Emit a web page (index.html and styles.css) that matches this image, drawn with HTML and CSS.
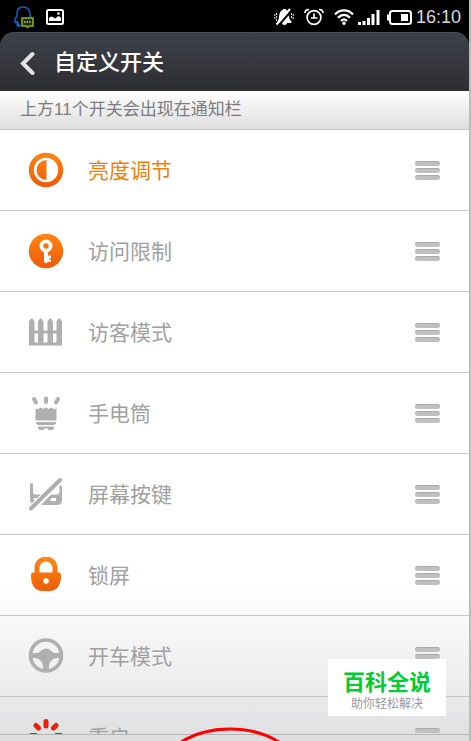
FILE: index.html
```html
<!DOCTYPE html>
<html lang="zh-CN">
<head>
    <meta charset="UTF-8">
    <meta name="viewport" content="width=device-width, initial-scale=1.0">
    <title>自定义开关</title>
    <link rel="stylesheet" href="styles.css">
</head>
<body>
    <svg width="0" height="0" class="defs" aria-hidden="true">
        <linearGradient id="orange" x1="0" y1="0" x2="0" y2="36" gradientUnits="userSpaceOnUse">
            <stop offset="0" stop-color="#ff8610"/>
            <stop offset="1" stop-color="#ec5a0a"/>
        </linearGradient>
    </svg>

    <div class="phone">
        <div class="status-bar">
            <div class="status-left">
                <svg width="22" height="24" viewBox="0 0 22 24" fill="none">
                    <path d="M7 21c-3 .5-4-.5-2-2.500M4 16.500c-1 1.500-2.800 1-2.200-1C2.300 13 4 12 4 9.500 4 5 5.500 2 10 2s7 3 7 8c0 1.500.5 2 .8 3M4 16.500c0 2 1.500 3 3 4" stroke="#0a62c8" stroke-width="1.600" stroke-linecap="round"/>
                    <path d="M9 13h11v8h-4l-1.500 1.500L13 21H9z" fill="#1c2800" stroke="#8fb414" stroke-width="1.500"/>
                    <path d="M11 17h1.500m1 0h1.500m1 0h1.500" stroke="#c0dc50" stroke-width="1.500"/>
                </svg>
                <svg width="20" height="18" viewBox="0 0 20 18">
                    <rect x="2" y="2" width="16" height="14" rx="1.500" fill="none" stroke="#fff" stroke-width="2"/>
                    <path d="M4 13v-3l2-1.500L8 9l2 1.500L12 9l2-1 2 2v3z" fill="#fff"/>
                    <circle cx="13.500" cy="5.500" r="1.300" fill="#fff"/>
                </svg>
            </div>
            <div class="status-right">
                <svg width="20" height="18" viewBox="0 0 20 18">
                    <path d="M3.500 13.500c2-2 1-6 2.500-9C7 2.500 8.500 2.500 9 1h3c0 1.500 1.500 1.500 2.200 3.500 1 3 .3 6.500 3.300 9V15h-14zM8 15h5c0 2.500-5 2.500-5 0z" fill="#fff"/>
                    <path d="M4.500 17.500 18.500 1.500" stroke="#000" stroke-width="2"/>
                    <path d="M2.500 16.500 16 1" stroke="#fff" stroke-width="2"/>
                    <path d="M2.500 5v8M.8 6v6M17.500 5v6M19.200 6v6" stroke="#ddd" stroke-dasharray="2 1"/>
                </svg>
                <svg width="20" height="18" viewBox="0 0 20 18" fill="none" stroke="#fff" stroke-width="1.700">
                    <circle cx="10" cy="9.500" r="6.900"/>
                    <path d="M10 5.500v4.500h3.500M7 10h3M1 5c0-2 1.500-3.500 4-3.500M19 5c0-2-1.500-3.500-4-3.500"/>
                </svg>
                <div class="signals">
                    <svg width="20" height="18" viewBox="0 0 20 18" fill="none" stroke="#fff" stroke-width="2.200">
                        <path d="M1 6.500c5-5.500 13-5.500 18 0M4 9.800c3.500-4 8.500-4 12 0M7 13c2-2.200 4-2.200 6 0"/>
                        <circle cx="10" cy="15.300" r="1.700" fill="#fff" stroke="none"/>
                    </svg>
                    <svg width="22" height="18" viewBox="0 0 22 18" fill="#fff">
                        <path d="M0 14h3v3H0zM4.500 13h3v4h-3zM9 10h3v7H9zM13.500 6h3v11h-3zM18.500 2h3v15h-3z"/>
                    </svg>
                </div>
                <div class="power">
                    <svg width="25" height="18" viewBox="0 0 25 18">
                        <rect x="3" y="3" width="21" height="13" rx="2.500" fill="none" stroke="#fff" stroke-width="2"/>
                        <path d="M0 6.500h3v6H0zM14 6h7v7h-7z" fill="#fff"/>
                    </svg>
                    <span class="clock">16:10</span>
                </div>
            </div>
        </div>

        <header class="title-bar">
            <button type="button" class="back" aria-label="返回">
                <svg width="16" height="24" viewBox="0 0 16 24">
                    <path d="M12.500 3 3 12.500 12.500 22" fill="none" stroke="#e2e2e2" stroke-width="4" stroke-linecap="round"/>
                </svg>
            </button>
            <h1>自定义开关</h1>
        </header>
        <p class="notice">上方11个开关会出现在通知栏</p>

        <ul class="switches">
            <li class="active">
                <svg class="icon" viewBox="0 0 36 36">
                    <circle cx="18" cy="18" r="14.700" fill="none" stroke="url(#orange)" stroke-width="5"/>
                    <path d="M18.500 8a10 10 0 0 0 0 20z" fill="url(#orange)"/>
                </svg>
                <span class="name">亮度调节</span>
                <button type="button" class="handle" aria-label="拖动 亮度调节"><i></i><i></i><i></i></button>
            </li>
            <li>
                <svg class="icon" viewBox="0 0 36 36">
                    <circle cx="18" cy="18" r="17.200" fill="url(#orange)"/>
                    <circle cx="18" cy="13" r="4.600" fill="none" stroke="#fff" stroke-width="3.800"/>
                    <path d="M16 17h4v5.500h3v3h-1.500V27H23v2h-3l-2 1.500-2-1.500z" fill="#fff"/>
                </svg>
                <span class="name">访问限制</span>
                <button type="button" class="handle" aria-label="拖动 访问限制"><i></i><i></i><i></i></button>
            </li>
            <li>
                <svg class="icon" viewBox="0 0 36 36" fill="#afafaf">
                    <path d="M1 31V7.500l2-3h1.500l2 3V31zM10 31V7.500l2-3h1.500l2 3V31zM19.500 31V7.500l2-3H23l2 3V31zM28.500 31V7.500l2-3H32l2 3V31z"/>
                    <path d="M3 16.500h30v3H3zM1 28h5.500l1 1 1-1 1 1 .5-1h5.500l1 1 1-1 1 1 1-1H25l1 1 1-1 1 1 .5-1H34v3.500H1z"/>
                </svg>
                <span class="name">访客模式</span>
                <button type="button" class="handle" aria-label="拖动 访客模式"><i></i><i></i><i></i></button>
            </li>
            <li>
                <svg class="icon" viewBox="0 0 36 36" fill="#afafaf">
                    <path d="M6 4 8 7.500M18 3.500V7M30 4l-2 3.500" stroke="#afafaf" stroke-width="4" stroke-linecap="round"/>
                    <path d="M7.500 13.500 10 14l2.500-1.500L15 14l3-1.500L21 14l2.500-1.500L26 14l2.500-.5V25.500h-21zM8 27h20v1.500L26 30H10l-2-1.500zM10 31.500h16V33l-1.500 2H20v-1.500h-4V35h-4.500L10 33z"/>
                </svg>
                <span class="name">手电筒</span>
                <button type="button" class="handle" aria-label="拖动 手电筒"><i></i><i></i><i></i></button>
            </li>
            <li>
                <svg class="icon" viewBox="0 0 36 36">
                    <path d="M2 8q2-2 3 0v9l2 1.500h10L7 28.500Q2 28 2 23zM34 10v14q0 5-5 5H13l10-10.500h6L31.500 17v-7q1.200-1.500 2.500 0z" fill="#afafaf"/>
                    <path d="M5.500 22.500 7 22h2.500v2L7 26zM23.500 22h4.500v3h-6z" fill="#fff"/>
                    <path d="M3 32.500 32 4" stroke="#fff" stroke-width="6"/>
                    <path d="M3 32.500 32 4" stroke="#afafaf" stroke-width="4" stroke-linecap="round"/>
                </svg>
                <span class="name">屏幕按键</span>
                <button type="button" class="handle" aria-label="拖动 屏幕按键"><i></i><i></i><i></i></button>
            </li>
            <li>
                <svg class="icon" viewBox="0 0 36 36">
                    <path d="M9 18v-7a9 9 0 0 1 18 0v7" fill="none" stroke="url(#orange)" stroke-width="5"/>
                    <path d="M5 15.500h26c1.500 0 2 1 2 3C33 28.500 29 34 21 34h-6C7 34 3 28.500 3 18.500c0-2 .500-3 2-3z" fill="url(#orange)"/>
                    <circle cx="18" cy="24" r="2.800" fill="#fff"/>
                </svg>
                <span class="name">锁屏</span>
                <button type="button" class="handle" aria-label="拖动 锁屏"><i></i><i></i><i></i></button>
            </li>
            <li>
                <svg class="icon" viewBox="0 0 36 36">
                    <circle cx="18" cy="17.500" r="15.500" fill="none" stroke="#afafaf" stroke-width="3.600"/>
                    <path d="M3 15h6c3 0 4.500-4.500 9-4.500s6 4.500 9 4.500h6v5h-4c-4 0-8 4-8 8v5h-6v-5c0-4-4-8-8-8H3z" fill="#afafaf"/>
                </svg>
                <span class="name">开车模式</span>
                <button type="button" class="handle" aria-label="拖动 开车模式"><i></i><i></i><i></i></button>
            </li>
            <li>
                <svg class="icon" viewBox="0 0 36 36">
                    <path d="M18 2.500V7M8 6.500l2.500 2.500M28 6.500 25.500 9M3.500 16.500h4M32.500 16.500h-4M8 27.500l3-3M28 27.500l-3-3M18 31.500v-5" stroke="#e62200" stroke-width="5" stroke-linecap="round"/>
                </svg>
                <span class="name">重启</span>
                <button type="button" class="handle" aria-label="拖动 重启"><i></i><i></i><i></i></button>
            </li>
        </ul>

        <div class="toolbar"></div>

        <!-- hand-drawn ring round the toolbar button -->
        <svg class="ring" width="110" height="14" viewBox="0 0 110 14">
            <ellipse cx="55" cy="48" rx="70" ry="46" fill="none" stroke="#f00" stroke-width="3"/>
        </svg>

        <div class="badge">
            <strong>百科全说</strong>
            <span>助你轻松解决</span>
        </div>
    </div>
</body>
</html>
```
FILE: styles.css
```css
* { box-sizing: border-box; }
body { margin: 0; background: #000; font-family: Roboto, "Noto Sans CJK SC", sans-serif; }
svg { display: block; flex: none; }
button { border: none; background: none; padding: 0; cursor: pointer; }
.defs { position: absolute; }

.phone { position: relative; display: flex; flex-direction: column; height: 100vh; border-right: 2px solid #bcbcbc; overflow: hidden; }

.status-bar { display: flex; justify-content: space-between; align-items: center; height: 32px; padding: 2px 8px 0 13px; }
.status-left { display: flex; align-items: center; gap: 10px; }
.status-right { display: flex; align-items: center; gap: 10px; }
.signals { display: flex; gap: 4px; margin-right: -3px; }
.power { display: flex; align-items: center; gap: 4px; }
.clock { color: #d8d8d8; font-family: "Liberation Sans", Arial, sans-serif; font-size: 18px; line-height: 20px; }

.title-bar {
    display: flex;
    align-items: center;
    gap: 18px;
    height: 59px;
    padding: 2px 0 0 20px;
    border-top: 1px solid #4b4e54;
    border-radius: 14px 14px 0 0;
    background:
        repeating-linear-gradient(90deg, rgba(0, 0, 0, 0.06) 0 1px, transparent 1px 2px),
        repeating-linear-gradient(rgba(0, 0, 0, 0.06) 0 1px, transparent 1px 2px),
        linear-gradient(#41454d, #303136);
}
.title-bar h1 { margin: 0; color: #fff; font-size: 22px; font-weight: 500; line-height: 32px; }

.notice { margin: 0; height: 39px; padding-left: 20px; border-bottom: 1px solid #c4c4c4; background: linear-gradient(#fff, #dedede); color: #7c7c7c; font-family: "Liberation Sans", "Noto Sans CJK SC", sans-serif; font-size: 17px; line-height: 38px; }

.switches { flex: 1; min-height: 0; margin: 0; padding: 0; list-style: none; overflow: hidden; background: linear-gradient(to top, #dfe0e2, #ececec 45px, #fff 150px); }
.switches li { display: flex; align-items: center; height: 81px; padding: 0 29px 0 28px; border-bottom: 1px solid #c6c6c6; }
.icon { width: 36px; height: 36px; }
.name { flex: 1; margin-left: 24px; padding-top: 2px; color: #a0a0a0; font-size: 21px; line-height: 30px; }
.active .name { color: #ee8208; }
.handle { display: flex; flex-direction: column; gap: 2px; width: 25px; }
.handle i { height: 5px; border-top: 1px solid #aaa; border-radius: 3px; background: #c0c0c0; }

.toolbar { height: 7px; border-top: 1px solid #b4b5b7; background: #dedfe1; }
.ring { position: absolute; left: 175px; bottom: 0; }

.badge { position: absolute; right: 23px; bottom: 25px; display: flex; flex-direction: column; align-items: center; width: 118px; padding: 10px 0 4px; background: #fff; white-space: nowrap; }
.badge strong { color: #0c3; font-size: 22px; font-weight: 700; line-height: 27px; }
.badge span { color: #999; font-size: 12px; line-height: 16px; }
```
